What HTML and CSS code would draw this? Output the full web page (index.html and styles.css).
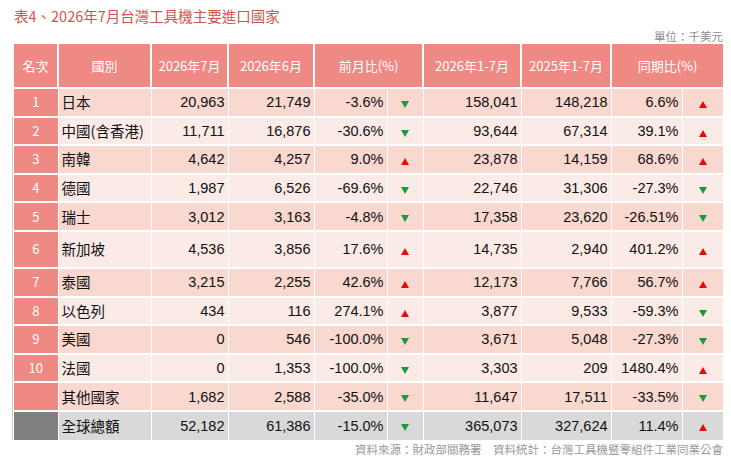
FILE: index.html
```html
<!DOCTYPE html>
<html lang="zh-Hant">
<head>
<meta charset="utf-8">
<title>表4、2026年7月台灣工具機主要進口國家</title>
<link rel="stylesheet" href="styles.css">
</head>
<body>
<div class="page">
  <h1 class="title">表4、2026年7月台灣工具機主要進口國家</h1>
  <div class="unit">單位：千美元</div>
  <table class="data">
    <colgroup>
      <col class="c-rank"><col class="c-name"><col class="c-m7"><col class="c-m6"><col class="c-mom"><col class="c-arr1"><col class="c-y26"><col class="c-y25"><col class="c-yoy"><col class="c-arr2">
    </colgroup>
    <thead>
      <tr>
        <th>名次</th><th>國別</th><th>2026年7月</th><th>2026年6月</th><th colspan="2">前月比(%)</th><th>2026年1-7月</th><th>2025年1-7月</th><th colspan="2">同期比(%)</th>
      </tr>
    </thead>
    <tbody>
      <tr class="odd"><td class="rank">1</td><td class="name">日本</td><td class="num">20,963</td><td class="num">21,749</td><td class="num">-3.6%</td><td class="arr"><span class="dn"></span></td><td class="num">158,041</td><td class="num">148,218</td><td class="num">6.6%</td><td class="arr"><span class="up"></span></td></tr>
      <tr class="even"><td class="rank">2</td><td class="name">中國(含香港)</td><td class="num">11,711</td><td class="num">16,876</td><td class="num">-30.6%</td><td class="arr"><span class="dn"></span></td><td class="num">93,644</td><td class="num">67,314</td><td class="num">39.1%</td><td class="arr"><span class="up"></span></td></tr>
      <tr class="odd"><td class="rank">3</td><td class="name">南韓</td><td class="num">4,642</td><td class="num">4,257</td><td class="num">9.0%</td><td class="arr"><span class="up"></span></td><td class="num">23,878</td><td class="num">14,159</td><td class="num">68.6%</td><td class="arr"><span class="up"></span></td></tr>
      <tr class="even"><td class="rank">4</td><td class="name">德國</td><td class="num">1,987</td><td class="num">6,526</td><td class="num">-69.6%</td><td class="arr"><span class="dn"></span></td><td class="num">22,746</td><td class="num">31,306</td><td class="num">-27.3%</td><td class="arr"><span class="dn"></span></td></tr>
      <tr class="odd"><td class="rank">5</td><td class="name">瑞士</td><td class="num">3,012</td><td class="num">3,163</td><td class="num">-4.8%</td><td class="arr"><span class="dn"></span></td><td class="num">17,358</td><td class="num">23,620</td><td class="num">-26.51%</td><td class="arr"><span class="dn"></span></td></tr>
      <tr class="even tall"><td class="rank">6</td><td class="name">新加坡</td><td class="num">4,536</td><td class="num">3,856</td><td class="num">17.6%</td><td class="arr"><span class="up"></span></td><td class="num">14,735</td><td class="num">2,940</td><td class="num">401.2%</td><td class="arr"><span class="up"></span></td></tr>
      <tr class="odd"><td class="rank">7</td><td class="name">泰國</td><td class="num">3,215</td><td class="num">2,255</td><td class="num">42.6%</td><td class="arr"><span class="up"></span></td><td class="num">12,173</td><td class="num">7,766</td><td class="num">56.7%</td><td class="arr"><span class="up"></span></td></tr>
      <tr class="even"><td class="rank">8</td><td class="name">以色列</td><td class="num">434</td><td class="num">116</td><td class="num">274.1%</td><td class="arr"><span class="up"></span></td><td class="num">3,877</td><td class="num">9,533</td><td class="num">-59.3%</td><td class="arr"><span class="dn"></span></td></tr>
      <tr class="odd"><td class="rank">9</td><td class="name">美國</td><td class="num">0</td><td class="num">546</td><td class="num">-100.0%</td><td class="arr"><span class="dn"></span></td><td class="num">3,671</td><td class="num">5,048</td><td class="num">-27.3%</td><td class="arr"><span class="dn"></span></td></tr>
      <tr class="even"><td class="rank">10</td><td class="name">法國</td><td class="num">0</td><td class="num">1,353</td><td class="num">-100.0%</td><td class="arr"><span class="dn"></span></td><td class="num">3,303</td><td class="num">209</td><td class="num">1480.4%</td><td class="arr"><span class="up"></span></td></tr>
      <tr class="odd"><td class="rank"></td><td class="name">其他國家</td><td class="num">1,682</td><td class="num">2,588</td><td class="num">-35.0%</td><td class="arr"><span class="dn"></span></td><td class="num">11,647</td><td class="num">17,511</td><td class="num">-33.5%</td><td class="arr"><span class="dn"></span></td></tr>
      <tr class="total"><td class="rank"></td><td class="name">全球總額</td><td class="num">52,182</td><td class="num">61,386</td><td class="num">-15.0%</td><td class="arr"><span class="dn"></span></td><td class="num">365,073</td><td class="num">327,624</td><td class="num">11.4%</td><td class="arr"><span class="up"></span></td></tr>
    </tbody>
  </table>
  <div class="source">資料來源：財政部關務署　資料統計：台灣工具機暨零組件工業同業公會</div>
</div>
</body>
</html>
```
FILE: styles.css
```css
html, body {
  margin: 0;
  padding: 0;
  background: #fff;
}

.page {
  padding: 6px 8px 0 14px;
  font-family: "Noto Sans CJK TC", "Noto Sans", sans-serif;
}

.title {
  margin: 0;
  font-size: 14.5px;
  line-height: 20px;
  font-weight: normal;
  color: #d4544c;
}

.unit {
  margin-top: 2px;
  text-align: right;
  font-size: 11.5px;
  line-height: 16px;
  color: #8c8c8c;
}

.data {
  width: 709px;
  table-layout: fixed;
  border-collapse: collapse;
  border-spacing: 0;
}

.c-rank { width: 44px; }
.c-name { width: 93px; }
.c-m7 { width: 77px; }
.c-m6 { width: 86px; }
.c-mom { width: 73px; }
.c-arr1 { width: 36px; }
.c-y26 { width: 98px; }
.c-y25 { width: 90px; }
.c-yoy { width: 71px; }
.c-arr2 { width: 41px; }

.data th,
.data td {
  padding: 0;
  border-left: 1px solid #fff;
  border-right: 1px solid #fff;
  border-top: 2px solid #fff;
  border-bottom: 2px solid #fff;
}

.data tr > :first-child { border-left: none; }
.data tr > :last-child { border-right: none; }
.data thead th { border-top: none; border-left-width: 2px; border-right-width: 2px; }
.data thead th:first-child { border-left: none; }
.data thead th:last-child { border-right: none; }
.data tbody tr:last-child td { border-bottom: none; }

.data thead tr { height: 44px; }

.data th {
  background: #ef8984;
  color: #fff;
  font-weight: normal;
  font-size: 13px;
  line-height: 18px;
  text-align: center;
}

.data tbody tr { height: 28.6px; }
.data tbody tr.tall { height: 37px; }

.data td {
  font-family: "Liberation Sans", "Noto Sans CJK TC", sans-serif;
  font-size: 14.5px;
  line-height: 18px;
  color: #111;
}

.odd td { background: #f8d8cf; }
.even td { background: #fbebe6; }
.total td { background: #d9d9d9; }

.data td.rank {
  background: #ef8984;
  color: #fff;
  text-align: center;
  font-family: "Noto Sans CJK TC", sans-serif;
  font-size: 13px;
}

.data tbody tr:nth-child(n+2) td.rank {
  box-shadow: -1px 0 0 #fff, -2px 0 0 #cfcfcf;
}

.data tr.total td.rank { background: #808080; }

.data td.name {
  text-align: left;
  padding-left: 3px;
  font-family: "Noto Sans CJK TC", sans-serif;
  font-size: 14.5px;
}

.data td.num {
  text-align: right;
  padding-right: 3px;
}

.data td.arr {
  text-align: center;
}

.dn,
.up {
  display: inline-block;
  width: 0;
  height: 0;
  border-left: 4px solid transparent;
  border-right: 4px solid transparent;
  vertical-align: middle;
  position: relative;
  top: 1px;
}

.dn { border-top: 7px solid #179c3b; }
.up { border-bottom: 7px solid #e60a0a; }

.source {
  text-align: right;
  font-size: 11.5px;
  line-height: 16px;
  margin-top: 1px;
  color: #9a9a9a;
}
```
